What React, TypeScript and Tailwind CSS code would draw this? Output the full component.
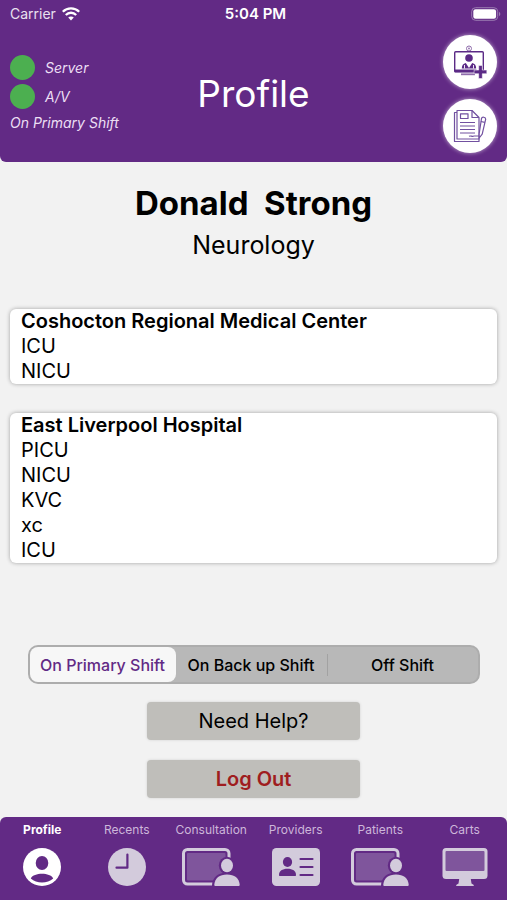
import { useState, type ReactNode } from "react";

const facilities = [
  { name: "Coshocton Regional Medical Center", units: ["ICU", "NICU"] },
  { name: "East Liverpool Hospital", units: ["PICU", "NICU", "KVC", "xc", "ICU"] },
];

const shifts = ["On Primary Shift", "On Back up Shift", "Off Shift"];

function WifiIcon() {
  return (
    <svg width="18" height="14" viewBox="0 0 18 14" fill="none" stroke="white" strokeWidth="2.3" aria-hidden="true">
      <path d="M.8 4.800C5.400.2 12.600.2 17.200 4.800" />
      <path d="M3.800 8c3-3 7.400-3 10.400 0" />
      <path d="M9 13.400 6.200 10.600c1.600-1.500 4-1.500 5.600 0z" fill="white" stroke="none" />
    </svg>
  );
}

function BatteryIcon() {
  return (
    <svg width="30" height="14" viewBox="0 0 30 14" fill="none" aria-hidden="true">
      <rect x=".7" y=".7" width="26" height="12.600" rx="3.800" stroke="#9a7bb1" strokeWidth="1" />
      <rect x="2.300" y="2.300" width="22.800" height="9.400" rx="2.200" fill="white" />
      <path d="M28 4.800c1.800.8 1.800 3.600 0 4.400z" fill="#9a7bb1" />
    </svg>
  );
}

function AddConsultIcon() {
  return (
    <svg width="34" height="34" viewBox="0 0 34 34" fill="none" aria-hidden="true">
      <circle cx="16" cy="3.500" r="2.500" stroke="#8f6cab" strokeWidth="1" />
      <circle cx="16" cy="3.500" r=".9" fill="#8f6cab" />
      <rect x="1.700" y="6.700" width="28.600" height="20" rx="1" stroke="#5b2a86" strokeWidth="1.400" />
      <path d="M1.500 24.500h22v2.700h-22z" fill="#5b2a86" />
      <circle cx="16" cy="13" r="3.800" fill="#5b2a86" />
      <path d="M8.800 23.500c0-3.200 1.300-4.700 4-5.500l3.200 5 3.200-5c2.700.8 4 2.300 4 5.500z" fill="#5b2a86" />
      <path d="M11.500 20v3.500M20.500 20v3.500" stroke="white" strokeWidth=".9" />
      <path d="M8 29.300h14" stroke="#8f6cab" strokeWidth="1.800" />
      <path d="M25.700 20.500h3.600v4.600h4.500v3.600h-4.500v4.800h-3.600v-4.800h-4.600v-3.600h4.600z" fill="#5b2a86" stroke="white" strokeWidth=".5" />
    </svg>
  );
}

function NotesIcon() {
  return (
    <svg width="34" height="34" viewBox="0 0 34 34" fill="none" stroke="#7150a0" strokeWidth="1.200" strokeLinejoin="round" aria-hidden="true">
      <path d="M4 3.500H1.500V32.500H26v-3" />
      <path d="M4 1.500h15l7 7V30H4z" />
      <path d="M19 1.500v7h7" />
      <path d="M7.500 4.800h7.500v4.700H7.500z" />
      <path d="M7 13.500h15M7 17h15M7 20.500h15M7 24h15" />
      <path d="M16 27.300c2-1 3 .8 5-.3h5" />
      <path d="m26.200 24.500 2.300-15c.5-2 4.200-1.500 4.200.7l-3.500 15-3 3.800z" fill="white" />
      <path d="m27.800 12.500 4 .8" />
    </svg>
  );
}

function ProfileIcon() {
  return (
    <svg width="38" height="38" viewBox="0 0 38 38" aria-hidden="true">
      <circle cx="19" cy="19" r="19" fill="white" />
      <ellipse cx="19" cy="15" rx="6.300" ry="7" fill="#622a85" />
      <path d="M7.800 30.500c3-6.200 19.400-6.200 22.400 0-5.800 5.200-16.600 5.200-22.400 0z" fill="#622a85" />
    </svg>
  );
}

function ClockIcon() {
  return (
    <svg width="38" height="38" viewBox="0 0 38 38" fill="none" aria-hidden="true">
      <circle cx="19" cy="19" r="19" fill="#d3cbdc" />
      <path d="M19.400 6.500v13.200H8.500" stroke="#622a85" strokeWidth="2.200" strokeLinecap="round" strokeLinejoin="round" />
    </svg>
  );
}

function ScreenPersonIcon() {
  return (
    <svg width="58" height="38" viewBox="0 0 58 38" fill="none" aria-hidden="true">
      <rect x="1.500" y="1.500" width="45.500" height="34.500" rx="4" stroke="#d3cbdc" strokeWidth="3" />
      <rect x="5" y="5" width="38.500" height="27.500" rx="1" fill="#7f559c" />
      <ellipse cx="45" cy="17.500" rx="8.200" ry="8.800" fill="#622a85" />
      <path d="M30 38c0-8.500 6-13.500 15-13.500S60 29.500 60 38z" fill="#622a85" />
      <ellipse cx="45" cy="17.500" rx="6" ry="6.700" fill="#d3cbdc" />
      <path d="M32.300 36.500C33 30 37.500 26.500 45 26.500S57 30 57.700 36.500c0 1-.4 1.500-1.200 1.500h-23c-.8 0-1.200-.5-1.200-1.500z" fill="#d3cbdc" />
    </svg>
  );
}

function IdCardIcon() {
  return (
    <svg width="48" height="38" viewBox="0 0 48 38" fill="none" aria-hidden="true">
      <rect width="48" height="38" rx="4.500" fill="#d3cbdc" />
      <ellipse cx="15.500" cy="14" rx="4.600" ry="5" fill="#622a85" />
      <path d="M7 27c0-4.200 3.300-6.300 8.500-6.300S24 22.800 24 27c0 .7-.3 1-1 1H8c-.7 0-1-.3-1-1z" fill="#622a85" />
      <path d="M28.500 11h12M28.500 19h12M28.500 27h12" stroke="#622a85" strokeWidth="2.200" strokeLinecap="round" />
    </svg>
  );
}

function MonitorIcon() {
  return (
    <svg width="46" height="38" viewBox="0 0 46 38" aria-hidden="true">
      <path d="M17.500 29h11l1 6.500 2 1.200c.7.500.4 1.300-.5 1.300H15c-.9 0-1.200-.8-.5-1.300l2-1.200z" fill="#d3cbdc" />
      <rect x=".5" width="45" height="31" rx="3.500" fill="#d3cbdc" />
      <rect x="3.500" y="3" width="39" height="20" rx="1" fill="#7f559c" />
    </svg>
  );
}

const tabs: { label: string; icon: ReactNode }[] = [
  { label: "Profile", icon: <ProfileIcon /> },
  { label: "Recents", icon: <ClockIcon /> },
  { label: "Consultation", icon: <ScreenPersonIcon /> },
  { label: "Providers", icon: <IdCardIcon /> },
  { label: "Patients", icon: <ScreenPersonIcon /> },
  { label: "Carts", icon: <MonitorIcon /> },
];

function StatusDot({ label }: { label: string }) {
  return (
    <div className="flex items-center gap-2.5">
      <span className="size-[25px] rounded-full bg-[#4caf50]" />
      <span>{label}</span>
    </div>
  );
}

export default function App() {
  const [shift, setShift] = useState(0);

  return (
    <div className="flex min-h-screen flex-col bg-[#f2f2f2] font-['Inter','Liberation_Sans',sans-serif] text-black">
      <header className="rounded-b-md bg-[#622a85] pb-[9px] text-white">
        <div className="grid h-[27px] grid-cols-3 items-center pr-1.5 pl-2.5 text-sm">
          <div className="flex items-center gap-1.5 text-[#e9e0ef]">
            Carrier
            <WifiIcon />
          </div>
          <div className="text-center text-[15px] font-semibold">5:04 PM</div>
          <div className="flex justify-end">
            <BatteryIcon />
          </div>
        </div>
        <div className="grid grid-cols-[1fr_auto_1fr] items-center px-2.5 pt-2">
          <div className="flex flex-col gap-1 text-sm text-[#ecdff4] italic">
            <StatusDot label="Server" />
            <StatusDot label="A/V" />
            <p>On Primary Shift</p>
          </div>
          <h1 className="text-[37px]">Profile</h1>
          <div className="flex flex-col items-end gap-2.5">
            <button type="button" aria-label="New consultation" className="flex size-[54px] items-center justify-center rounded-full bg-white shadow-[0_0_4px_#ffffff99]">
              <AddConsultIcon />
            </button>
            <button type="button" aria-label="Notes" className="flex size-[54px] items-center justify-center rounded-full bg-white shadow-[0_0_4px_#ffffff99]">
              <NotesIcon />
            </button>
          </div>
        </div>
      </header>

      <main className="flex flex-1 flex-col px-2.5 pt-5 pb-[19px]">
        <h2 className="text-center text-[33px] leading-[42px] font-bold whitespace-pre">Donald  Strong</h2>
        <p className="text-center text-[25px] leading-[42px]">Neurology</p>

        <div className="mt-[43px] flex flex-col gap-[29px]">
          {facilities.map((facility) => (
            <section key={facility.name} className="rounded-md bg-white px-[11px] text-xl leading-[25px] shadow-[0_0_4px_#00000055]">
              <h3 className="font-semibold">{facility.name}</h3>
              <ul>
                {facility.units.map((unit) => (
                  <li key={unit}>{unit}</li>
                ))}
              </ul>
            </section>
          ))}
        </div>

        <div className="mt-auto flex flex-col items-center">
          <div
            role="radiogroup"
            aria-label="Shift status"
            className="grid w-full max-w-[452px] grid-cols-[146fr_152fr_150fr] items-center rounded-[10px] border-2 border-[#adadad] bg-[#b8b8b8]"
          >
            {shifts.map((label, index) => (
              <label
                key={label}
                className="flex h-[35px] cursor-pointer items-center rounded-lg text-base font-medium whitespace-nowrap has-checked:bg-[#f7f7f7] has-checked:text-[#622a85]"
              >
                <input
                  type="radio"
                  name="shift"
                  className="size-0 appearance-none"
                  checked={shift === index}
                  onChange={() => setShift(index)}
                />
                <span className="flex-1 text-center">{label}</span>
                {index < shifts.length - 1 && shift !== index && shift !== index + 1 && (
                  <span className="h-[22px] w-px bg-[#a2a2a2]" />
                )}
              </label>
            ))}
          </div>
          <button type="button" className="mt-[18px] h-[38px] w-[213px] rounded-sm bg-[#bfbeba] text-xl shadow-[0_0_3px_#00000022]">
            Need Help?
          </button>
          <button type="button" className="mt-5 h-[38px] w-[213px] rounded-sm bg-[#bfbeba] text-xl font-semibold text-[#9f1d20] shadow-[0_0_3px_#00000022]">
            Log Out
          </button>
        </div>
      </main>

      <nav className="grid grid-cols-6 rounded-t-md bg-[#622a85] pt-1 pb-3.5">
        {tabs.map((tab, index) => (
          <a
            key={tab.label}
            href="#"
            aria-current={index === 0 ? "page" : undefined}
            className="flex flex-col items-center gap-2.5 text-xs text-[#cdb6da] aria-[current=page]:font-bold aria-[current=page]:text-white"
          >
            <span className="leading-[17px]">{tab.label}</span>
            {tab.icon}
          </a>
        ))}
      </nav>
    </div>
  );
}
